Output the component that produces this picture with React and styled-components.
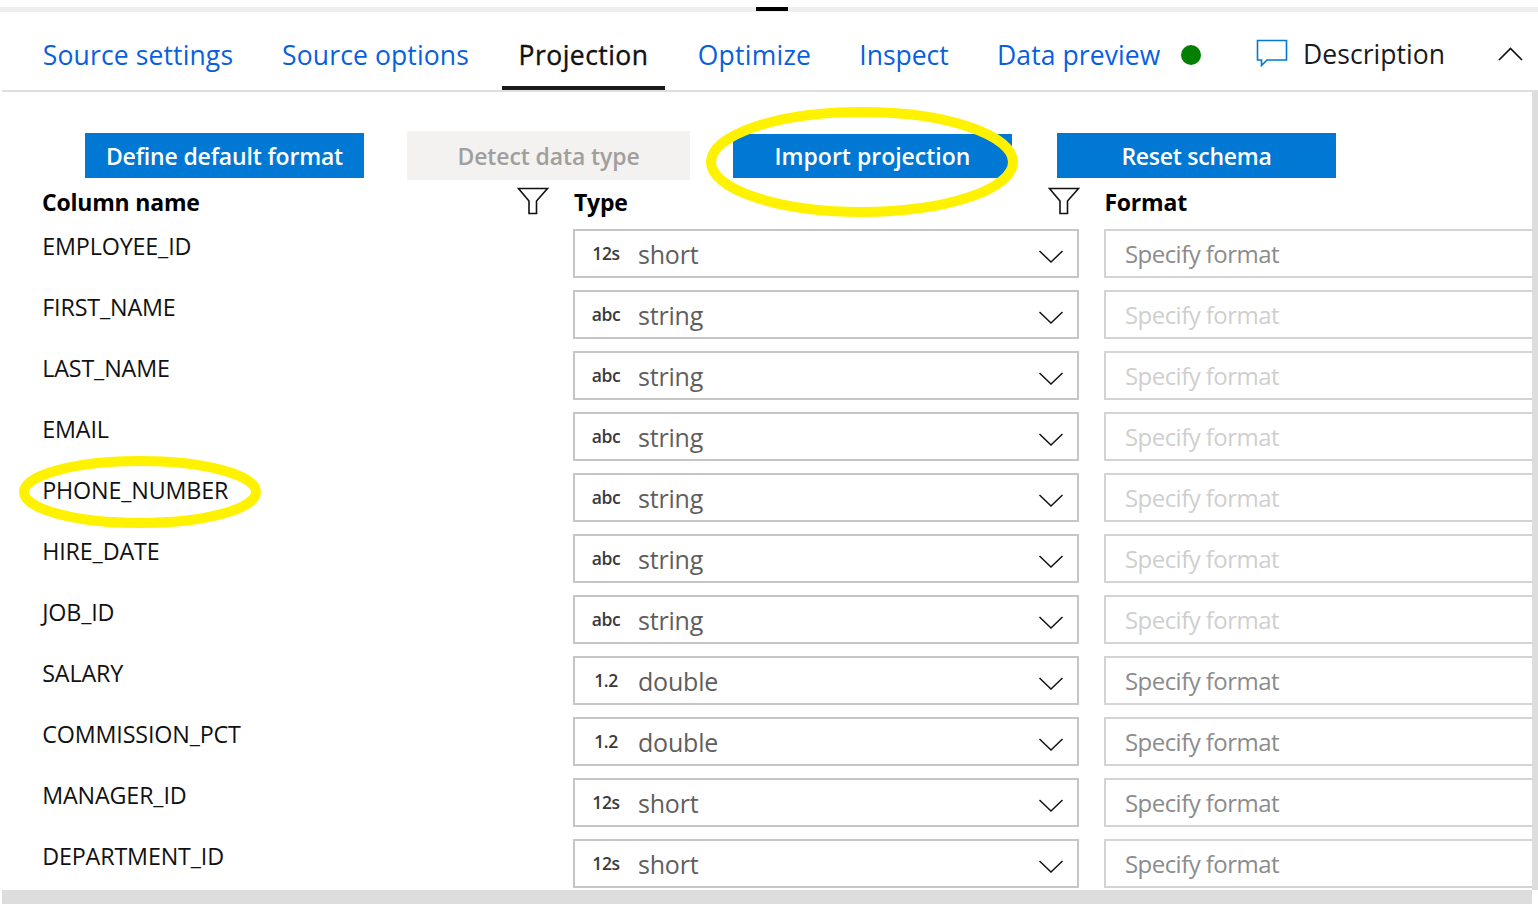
import React from "react";
import styled, { createGlobalStyle } from "styled-components";

const Global = createGlobalStyle`
  html, body { margin: 0; padding: 0; background: #fff; }
  * { box-sizing: border-box; }
`;
const FONT = `"Open Sans", "Noto Sans", "Liberation Sans", sans-serif`;

const Page = styled.div`
  position: relative; width: 1538px; height: 904px; overflow: hidden; background: #fff;
  font-family: ${FONT}; display: flex; flex-direction: column; padding-top: 7px;
`;
const TopStrip = styled.div`height: 5px; background: #eeeeee; flex: none;`;
const Grip = styled.div`width: 32px; height: 4px; margin-left: 756px; background: #000;`;
const TabBar = styled.div`
  flex: none; height: 80px; margin-left: 2px; border-bottom: 2px solid #dfdfdf;
  display: flex; align-items: stretch; padding-left: 25px;
`;
const Tab = styled.div`
  flex: none; width: ${p => p.$w}px; height: 78px; padding-top: 24px; padding-left: ${p => p.$pl || 0}px;
  text-align: ${p => (p.$pl ? "left" : "center")};
  white-space: nowrap; font-size: 26.5px; line-height: 38px; letter-spacing: ${p => p.$ls || 0}px;
  -webkit-text-stroke: ${p => (p.$active ? "0.35px #111" : "0")};
  color: ${p => (p.$active ? "#111" : "#0a5fe0")};
  border-bottom: 4px solid ${p => (p.$active ? "#1a1a1a" : "transparent")};
`;
const Dot = styled.span`
  flex: none; width: 20px; height: 20px; border-radius: 50%; background: #038003;
  margin: 33px 0 0 0;
`;
const DescIcon = styled.svg`flex: none; width: 32px; height: 28px; margin: 27px 0 0 55px; display: block;`;
const DescLabel = styled.span`
  flex: none; width: 142px; margin: 23px 0 0 15px; font-size: 26.5px; line-height: 38px; color: #1a1a1a;
  white-space: nowrap; letter-spacing: 0.05px;
`;
const Collapse = styled.svg`flex: none; width: 26px; height: 14px; margin: 35px 0 0 53px; display: block;`;

const Middle = styled.div`flex: 1; min-height: 0; display: flex;`;
const Content = styled.div`flex: 1; min-width: 0; overflow: hidden;`;
const VScroll = styled.div`flex: none; width: 6px; background: #dddddd;`;
const HScroll = styled.div`flex: none; height: 14px; width: 1530px; margin-left: 2px; background: #dddddd;`;

const Actions = styled.div`
  display: flex; align-items: center; height: 49px; margin-top: 39px; padding-left: 85px;
`;
const Button = styled.div`
  flex: none; width: ${p => p.$w || 279}px; height: ${p => p.$h || 45}px; margin-right: ${p => p.$mr || 0}px;
  display: flex; align-items: center; justify-content: center;
  font-size: 23px; font-weight: 600; letter-spacing: ${p => p.$ls}px; white-space: nowrap;
  background: ${p => (p.$disabled ? "#f3f2f1" : "#0078d4")};
  color: ${p => (p.$disabled ? "#a19f9d" : "#fff")};
`;

const Grid = styled.div`
  display: grid; grid-template-columns: 530px 506px 453px; column-gap: 0; padding-left: 43px;
`;
const HeaderRow = styled(Grid)`height: 49px; align-items: start;`;
const HeadCell = styled.div`
  display: flex; align-items: flex-start; justify-content: space-between; padding-top: 6px;
  font-size: 23px; font-weight: 700; line-height: 32px; color: #000; letter-spacing: -0.2px;
`;
const NameHead = styled.span`margin-left: -1px;`;
const FormatHead = styled(HeadCell)`margin-left: 25.4px;`;
const TypeLabel = styled.span`margin-left: 1px;`;
const Filter = styled.svg`display: block; width: 32px; height: 28px; flex: none; margin: 1px ${p => p.$mr}px 0 0;`;

const Rows = styled.div`display: flex; flex-direction: column; gap: 12px;`;
const Row = styled(Grid)`height: 49px;`;
const ColumnName = styled.div`
  font-size: 23.3px; line-height: 34px; color: #111; white-space: nowrap; letter-spacing: -0.15px; margin-left: -0.8px;
`;
const Select = styled.div`
  display: flex; align-items: center; height: 49px; border: 2px solid #c6c6c6; padding-left: 15px; background: #fff;
`;
const Badge = styled.span`
  flex: none; width: 32px; text-align: center; font-size: 17.5px; font-weight: 600; color: #3a3a3a;
  margin-top: -2px; letter-spacing: -0.4px;
`;
const Value = styled.span`
  flex: 1; margin-left: 16px; font-size: 25px; color: #605e5c; line-height: 34px; margin-top: 1px; letter-spacing: -0.2px;
`;
const Caret = styled.svg`flex: none; width: 26px; height: 16px; margin: 4px 13px 0 0; display: block;`;
const FormatInput = styled.div`
  margin-left: 25px; height: 49px; border: 2px solid #d4d4d4; border-right: none; padding-left: 19px;
  display: flex; align-items: center; font-size: 24px; letter-spacing: -0.55px;
  color: ${p => (p.$dim ? "#cfcfcf" : "#8c8c8c")};
`;

const Highlight = styled.svg`position: absolute; left: 0; top: 0; width: 1538px; height: 904px; pointer-events: none;`;

const FilterIcon = ({ mr }) => (
  <Filter $mr={mr} viewBox="0 0 32 28" fill="none" stroke="#111" strokeWidth="1.6">
    <path d="M1.5 1.5H30.5L19.5 14V26.5H12V14Z" />
  </Filter>
);

const data = [
  ["EMPLOYEE_ID", "12s", "short", false],
  ["FIRST_NAME", "abc", "string", true],
  ["LAST_NAME", "abc", "string", true],
  ["EMAIL", "abc", "string", true],
  ["PHONE_NUMBER", "abc", "string", true],
  ["HIRE_DATE", "abc", "string", true],
  ["JOB_ID", "abc", "string", true],
  ["SALARY", "1.2", "double", false],
  ["COMMISSION_PCT", "1.2", "double", false],
  ["MANAGER_ID", "12s", "short", false],
  ["DEPARTMENT_ID", "12s", "short", false],
];

export default function App() {
  return (
    <Page>
      <Global />
      <TopStrip><Grip /></TopStrip>
      <TabBar>
        <Tab $w={222} $ls={0.13}>Source settings</Tab>
        <Tab $w={253} $ls={0.12}>Source options</Tab>
        <Tab $w={163} $active $ls={0.45}>Projection</Tab>
        <Tab $w={179} $ls={0.25}>Optimize</Tab>
        <Tab $w={120}>Inspect</Tab>
        <Tab $w={217} $pl={33} $ls={0.1}>Data preview</Tab>
        <Dot />
        <DescIcon viewBox="0 0 32 28" fill="none" stroke="#0078d4" strokeWidth="1.6">
          <path d="M1.5 1.5H30.5V21H11L5.5 26.5V21H1.5Z" />
        </DescIcon>
        <DescLabel>Description</DescLabel>
        <Collapse viewBox="0 0 26 14" fill="none" stroke="#111" strokeWidth="1.7">
          <path d="M1 13L12.5 1.5L24 13" />
        </Collapse>
      </TabBar>
      <Middle>
        <Content>
          <Actions>
            <Button $mr={43} $ls={-0.17}>Define default format</Button>
            <Button $disabled $w={283} $h={49} $mr={43} $ls={-0.12}>Detect data type</Button>
            <Button $h={44} $mr={45} $ls={0}>Import projection</Button>
            <Button $ls={-0.25}>Reset schema</Button>
          </Actions>
          <HeaderRow>
            <HeadCell><NameHead>Column name</NameHead><FilterIcon mr={24} /></HeadCell>
            <HeadCell><TypeLabel>Type</TypeLabel><FilterIcon mr={-1} /></HeadCell>
            <FormatHead>Format</FormatHead>
          </HeaderRow>
          <Rows>
            {data.map(([name, badge, type, dim]) => (
              <Row key={name}>
                <ColumnName>{name}</ColumnName>
                <Select>
                  <Badge>{badge}</Badge>
                  <Value>{type}</Value>
                  <Caret viewBox="0 0 26 16" fill="none" stroke="#111" strokeWidth="1.5">
                    <path d="M1.5 3L13 14L24.5 3" />
                  </Caret>
                </Select>
                <FormatInput $dim={dim}>Specify format</FormatInput>
              </Row>
            ))}
          </Rows>
        </Content>
        <VScroll />
      </Middle>
      <HScroll />
      <Highlight viewBox="0 0 1538 904" fill="none" stroke="#fff200" strokeWidth="10">
        <ellipse cx="862" cy="162" rx="151" ry="50" />
        <ellipse cx="140" cy="492" rx="116" ry="31" />
      </Highlight>
    </Page>
  );
}
